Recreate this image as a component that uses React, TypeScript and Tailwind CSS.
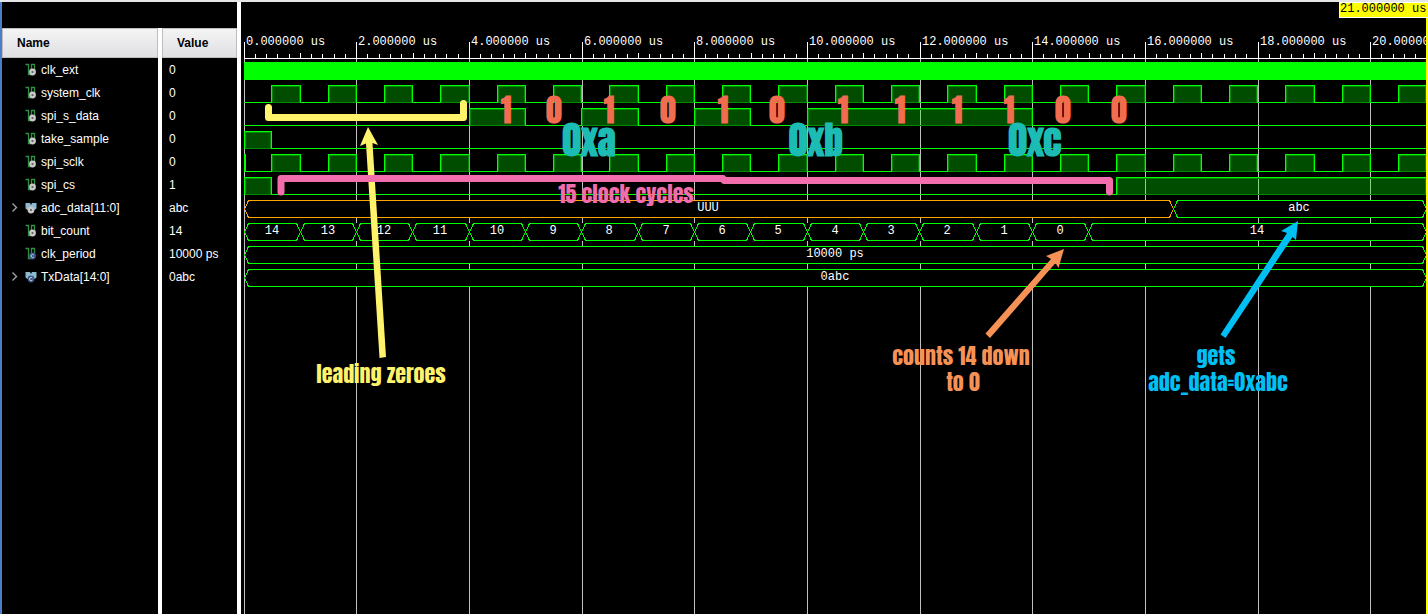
import React from 'react';

type Kind = 'signal' | 'bus' | 'constant' | 'constantBus';

interface Row {
  name: string;
  value: string;
  kind: Kind;
}

const rows: Row[] = [
  { name: 'clk_ext', value: '0', kind: 'signal' },
  { name: 'system_clk', value: '0', kind: 'signal' },
  { name: 'spi_s_data', value: '0', kind: 'signal' },
  { name: 'take_sample', value: '0', kind: 'signal' },
  { name: 'spi_sclk', value: '0', kind: 'signal' },
  { name: 'spi_cs', value: '1', kind: 'signal' },
  { name: 'adc_data[11:0]', value: 'abc', kind: 'bus' },
  { name: 'bit_count', value: '14', kind: 'signal' },
  { name: 'clk_period', value: '10000 ps', kind: 'constant' },
  { name: 'TxData[14:0]', value: '0abc', kind: 'constantBus' },
];

function SignalIcon({ kind }: { kind: Kind }) {
  const isBus = kind === 'bus' || kind === 'constantBus';
  const isConstant = kind === 'constant' || kind === 'constantBus';
  return (
    <svg width="12" height="14" viewBox="0 0 12 14" className="shrink-0" aria-hidden="true">
      {isBus ? (
        <path d="M0.5 2H5L6 4L7 2H11.5V7.5L9.5 9H2.5L0.5 7.5Z" fill="#8fb9cf" />
      ) : (
        <path d="M0.5 1.5H3.500V11.500H6M6.500 9V1.500H9.500V9" fill="none" stroke="#2f9044" strokeWidth="1.3" />
      )}
      <circle cx={isBus ? 6 : 7.5} cy="9" r="3.4" fill={isConstant ? '#3c5684' : '#c9c9c9'} />
      {isConstant ? (
        <path d={isBus ? 'M7.3 7.9A1.6 1.6 0 1 0 7.3 10.1' : 'M8.8 7.9A1.6 1.6 0 1 0 8.8 10.1'} fill="none" stroke="#c5d2ea" strokeWidth="1" />
      ) : (
        <circle cx={isBus ? 6 : 7.5} cy="9" r="1.1" fill="#5c5c5c" />
      )}
    </svg>
  );
}

function SignalTable() {
  return (
    <table className="h-full w-full table-fixed border-separate border-spacing-0 text-left text-xs text-white">
      <colgroup>
        <col className="w-[160px]" />
        <col />
      </colgroup>
      <thead>
        <tr className="h-[26px]">
          <td colSpan={2} className="p-0" />
        </tr>
        <tr className="h-[30px] text-black">
          <th scope="col" className="border-r-4 border-white p-0">
            <div className="flex h-[30px] items-center border border-[#bdbdbd] bg-linear-to-b from-[#f4f4f5] to-[#e0e0e3] pl-[14px]">Name</div>
          </th>
          <th scope="col" className="p-0">
            <div className="flex h-[30px] items-center border border-[#bdbdbd] bg-linear-to-b from-[#f4f4f5] to-[#e0e0e3] pl-[14px]">Value</div>
          </th>
        </tr>
      </thead>
      <tbody>
        {rows.map((row) => (
          <tr key={row.name} className="h-[23px]">
            <th scope="row" className="border-r-4 border-white p-0 font-normal">
              <div className="flex h-[23px] items-center pl-2">
                <span className="flex w-[15px] shrink-0">
                  {row.kind === 'bus' || row.kind === 'constantBus' ? (
                    <button type="button" aria-label={`Expand ${row.name}`}>
                      <svg width="9" height="11" viewBox="0 0 9 11">
                        <path d="M2.5 1.5L6.5 5.5L2.5 9.5" fill="none" stroke="#a0a0a0" strokeWidth="1.4" />
                      </svg>
                    </button>
                  ) : null}
                </span>
                <SignalIcon kind={row.kind} />
                <span className="pl-1">{row.name}</span>
              </div>
            </th>
            <td className="p-0 pl-[7px]">{row.value}</td>
          </tr>
        ))}
        <tr>
          <td className="border-r-4 border-white p-0" />
          <td className="p-0" />
        </tr>
      </tbody>
    </table>
  );
}

const START = 244;
const END = 21;
const PX_PER_US = 169 / 3;
const GREEN = '#00ff00';
const ORANGE = '#ffa500';

const gridX = (t: number) => Math.floor(START + t * PX_PER_US + 0.01);
const edgeX = (t: number) => (t <= 0 ? START : Math.floor(START + t * PX_PER_US - 0.2));
const rowTop = (row: number) => 62 + row * 23;

function Digital({ row, highs }: { row: number; highs: [number, number][] }) {
  const top = rowTop(row);
  const low = top + 17;
  return (
    <g shapeRendering="crispEdges">
      <path d={`M${START} ${low + 0.5}H${edgeX(END)}`} stroke={GREEN} />
      {highs.map(([from, to]) => {
        const a = edgeX(from);
        const b = edgeX(to);
        return (
          <g key={from}>
            <rect x={a} y={top} width={b - a + 1} height={17} fill={GREEN} fillOpacity="0.3" />
            <path d={`M${a} ${low + 0.5}H${b}M${a + 1.5} ${low}V${top + 1.5}H${b - 0.5}V${low}`} fill="none" stroke="#008c00" />
            <path d={`M${a + 0.5} ${low + 1}V${top + 0.5}H${b + 0.5}V${low + 1}`} fill="none" stroke={GREEN} />
          </g>
        );
      })}
    </g>
  );
}

interface BusSegment {
  from: number;
  to: number;
  label: string;
  color?: string;
}

function Bus({ row, segments }: { row: number; segments: BusSegment[] }) {
  const top = rowTop(row);
  const low = top + 17;
  const mid = top + 9;
  return (
    <g>
      <rect x={START + 1} y={top} width={edgeX(END) - START} height={18} fill="#000" />
      {segments.map((s) => {
        const a = edgeX(s.from) + 0.5;
        const b = edgeX(s.to) + 0.5;
        return (
          <g key={s.from}>
            <path
              d={`M${a} ${mid}L${a + 4} ${top + 0.5}H${b - 4}L${b} ${mid}L${b - 4} ${low + 0.5}H${a + 4}Z`}
              fill="none"
              stroke={s.color ?? GREEN}
              shapeRendering="crispEdges"
            />
            <text x={Math.floor((a + b) / 2 - 0.5)} y={top + 11} textAnchor="middle" fill="#fff">
              {s.label}
            </text>
          </g>
        );
      })}
    </g>
  );
}

const clockHighs: [number, number][] = Array.from({ length: 21 }, (_, i) => [i + 0.5, i + 1]);

const bitCount: BusSegment[] = [
  ...Array.from({ length: 15 }, (_, i) => ({ from: i, to: i + 1, label: String(14 - i) })),
  { from: 15, to: END, label: '14' },
];

const bits: [string, number][] = [
  ['1', 506], ['0', 554], ['1', 609], ['0', 668], ['1', 723], ['0', 777], ['1', 843],
  ['1', 900], ['1', 957], ['1', 1009], ['0', 1063], ['0', 1119],
];

const nibbles: [string, number][] = [['0xa', 589], ['0xb', 816], ['0xc', 1035]];

function Ruler() {
  return (
    <g shapeRendering="crispEdges" fill="#fff">
      <rect x={START} y="58" width="1182" height="1" />
      {Array.from({ length: 105 }, (_, i) => {
        const top = i % 10 === 0 ? 42 : i % 5 === 0 ? 53 : 54;
        return <rect key={i} x={gridX(i / 5)} y={top} width="1" height={58 - top} />;
      })}
      {Array.from({ length: 11 }, (_, i) => (
        <text key={i} x={gridX(i * 2) + 2} y="45">
          {`${i * 2}.000000 us`}
        </text>
      ))}
    </g>
  );
}

function Annotations() {
  return (
    <g className="font-[Impact,Anton,'Roboto_Condensed','Liberation_Sans_Narrow','Open_Sans_Condensed','DejaVu_Sans_Condensed',sans-serif]" textAnchor="middle">
      <g fill="#fff36b">
        <path d="M268.5 107.5V117.5H463.5V103.5" fill="none" stroke="#fff36b" strokeWidth="7" strokeLinecap="round" strokeLinejoin="round" />
        <path d="M368 127L378 145L372.5 143L386 357L379.5 358L366 143.5L360 146Z" />
        <text x="381" y="383" fontSize="22">leading zeroes</text>
      </g>
      <g fill="#f26d4f" fontSize="31" fontWeight="700">
        {bits.map(([bit, x]) => (
          <text key={x} x={x} y="123">{bit}</text>
        ))}
      </g>
      <g fill="#1cbbb4" fontSize="37" fontWeight="700">
        {nibbles.map(([label, x]) => (
          <text key={x} x={x} y="156">{label}</text>
        ))}
      </g>
      <g fill="#f26dab">
        <path d="M281 192V178.5H723L724 180.5H1109.5V192" fill="none" stroke="#f26dab" strokeWidth="7" strokeLinecap="round" strokeLinejoin="round" />
        <text x="626" y="203" fontSize="22">15 clock cycles</text>
      </g>
      <g fill="#f79256" fontSize="22">
        <path d="M1064 249L1058.500 268L1055.500 263L990 338L985.500 333.500L1051 259L1046 256Z" />
        <text x="961" y="365">counts 14 down</text>
        <text x="963" y="391">to 0</text>
      </g>
      <g fill="#00bff3" fontSize="22">
        <path d="M1298 221L1296 240L1292.500 237L1225.500 338L1220.500 334.500L1287 233L1281 231Z" />
        <text x="1216" y="365">gets</text>
        <text x="1218" y="391">adc_data=0xabc</text>
      </g>
    </g>
  );
}

function WaveChart() {
  return (
    <svg
      width="1187"
      height="612"
      viewBox="241 2 1187 612"
      className="block shrink-0 font-['Liberation_Mono',monospace] text-xs"
      role="img"
      aria-label="SPI simulation waveforms"
    >
      <g shapeRendering="crispEdges" fill="#c0c0c0">
        {Array.from({ length: 11 }, (_, i) => (
          <rect key={i} x={gridX(i * 2)} y="59" width="1" height="555" />
        ))}
      </g>
      <Ruler />
      <rect x={START} y="62" width="1182" height="18" fill={GREEN} />
      <Digital row={1} highs={clockHighs} />
      <Digital row={2} highs={[[4, 5], [6, 7], [8, 9], [10, 14]]} />
      <Digital row={3} highs={[[0, 0.5]]} />
      <Digital row={4} highs={clockHighs} />
      <rect x={START} y="154" width="2" height="18" fill={GREEN} />
      <Digital row={5} highs={[[0, 0.5], [15.5, END]]} />
      <Bus row={6} segments={[{ from: 0, to: 16.5, label: 'UUU', color: ORANGE }, { from: 16.5, to: END, label: 'abc' }]} />
      <Bus row={7} segments={bitCount} />
      <Bus row={8} segments={[{ from: 0, to: END, label: '10000 ps' }]} />
      <Bus row={9} segments={[{ from: 0, to: END, label: '0abc' }]} />
      <rect x="1426" y="2" width="2" height="612" fill="#ffff00" />
      <rect x="1339" y="2" width="89" height="16" fill="#fff" />
      <rect x="1340" y="3" width="88" height="14" fill="#ffff00" />
      <text x="1340" y="12" fill="#000">21.000000 us</text>
      <Annotations />
    </svg>
  );
}

export default function App() {
  return (
    <main className="flex min-h-screen flex-col border-t-2 border-[#e4e6e8] bg-black font-['Liberation_Sans',Arial,sans-serif]">
      <div className="flex flex-1">
        <section className="w-[241px] shrink-0 border-r-4 border-l-2 border-r-white border-l-[#4a7ecb]" aria-label="Signals">
          <SignalTable />
        </section>
        <section className="min-w-0 flex-1 overflow-hidden" aria-label="Waveforms">
          <WaveChart />
        </section>
      </div>
    </main>
  );
}
